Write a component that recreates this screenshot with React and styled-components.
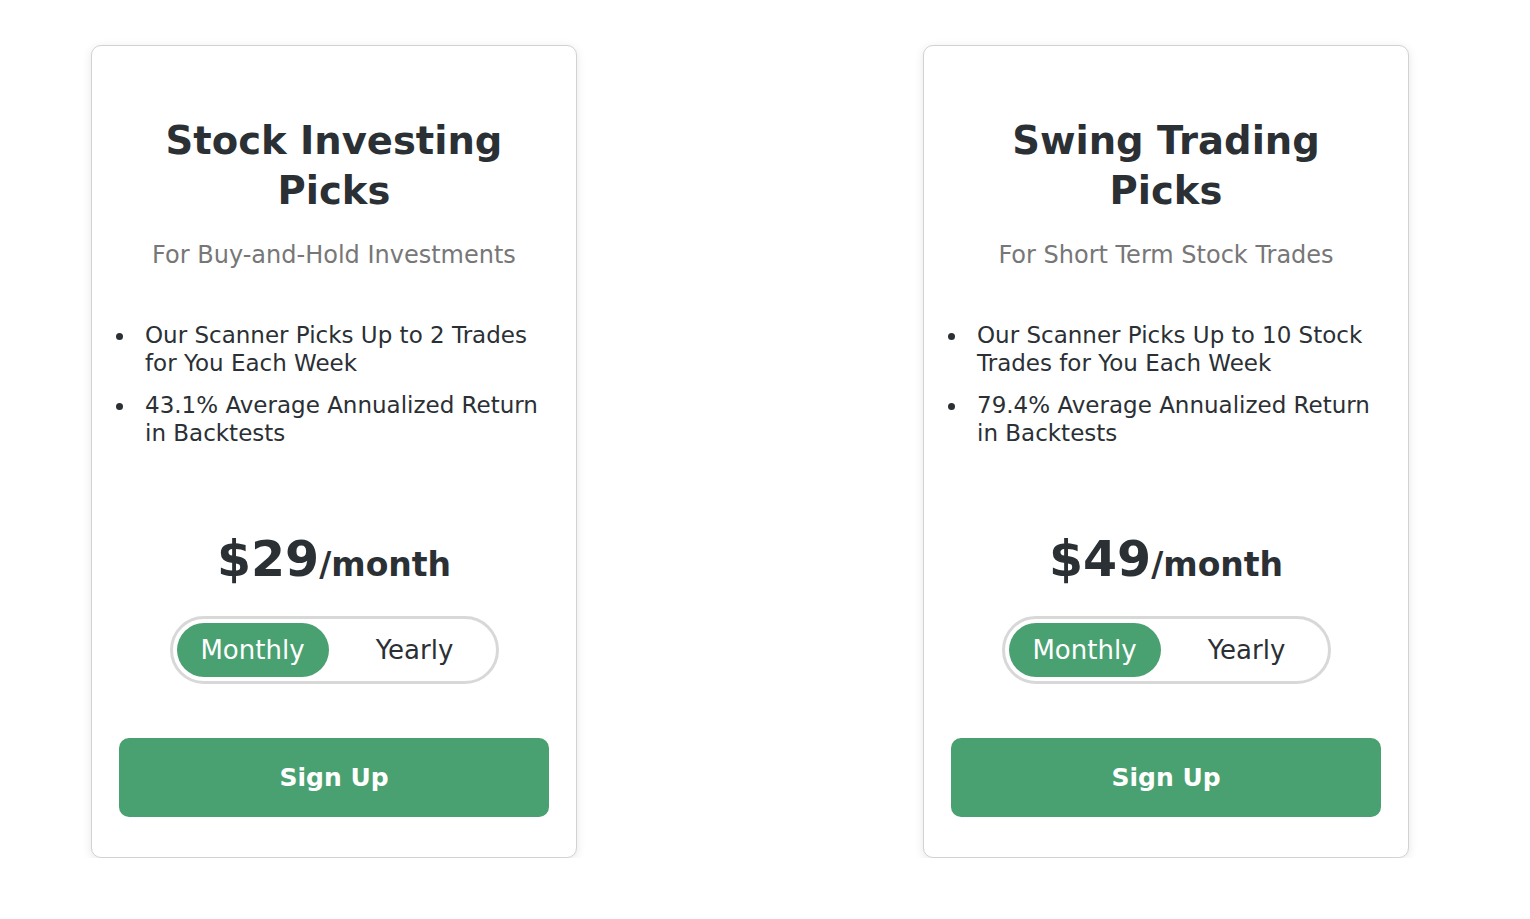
import React, { useState } from 'react';
import styled, { createGlobalStyle, css } from 'styled-components';

const GlobalStyle = createGlobalStyle`
    body {
        margin: 0;
        background: #fff;
        font-family: "DejaVu Sans", "Open Sans", sans-serif;
        color: #2b3035;
    }
`;

const plans = [
    {
        title: 'Stock Investing Picks',
        subtitle: 'For Buy-and-Hold Investments',
        features: [
            'Our Scanner Picks Up to 2 Trades for You Each Week',
            '43.1% Average Annualized Return in Backtests',
        ],
        price: 29,
    },
    {
        title: 'Swing Trading Picks',
        subtitle: 'For Short Term Stock Trades',
        features: [
            'Our Scanner Picks Up to 10 Stock Trades for You Each Week',
            '79.4% Average Annualized Return in Backtests',
        ],
        price: 49,
    },
];

const PlanCard = ({ plan }) => {
    const [period, setPeriod] = useState('monthly');
    return (
        <Card>
            <Title>{plan.title}</Title>
            <Subtitle>{plan.subtitle}</Subtitle>
            <Features>
                {plan.features.map(f => (
                    <Feature key={f}>{f}</Feature>
                ))}
            </Features>
            <Price>
                <Amount>${plan.price}</Amount>
                <Per>/month</Per>
            </Price>
            <Toggle>
                <ToggleOption active={period === 'monthly'} onClick={() => setPeriod('monthly')}>
                    Monthly
                </ToggleOption>
                <ToggleOption active={period === 'yearly'} onClick={() => setPeriod('yearly')}>
                    Yearly
                </ToggleOption>
            </Toggle>
            <SignUp>Sign Up</SignUp>
        </Card>
    );
};

const App = () => {
    return (
        <>
            <GlobalStyle />
            <Page>
                {plans.map(p => (
                    <PlanCard key={p.title} plan={p} />
                ))}
            </Page>
        </>
    );
};

const Page = styled.div`
    display: flex;
    align-items: flex-start;
    gap: 346px;
    padding: 45px 0 0 91px;
`;

const Card = styled.div`
    box-sizing: border-box;
    width: 486px;
    padding: 70px 27px 40px;
    border: 1px solid #d2d2d2;
    border-radius: 10px;
    box-shadow: 0 2px 10px rgba(0, 0, 0, 0.1);
    background: #fff;

    display: flex;
    flex-direction: column;
    align-items: center;
`;

const Title = styled.h2`
    margin: 0;
    padding: 0 40px;
    font-size: 38.5px;
    line-height: 50px;
    font-weight: 700;
    text-align: center;
    color: #2b3035;
`;

const Subtitle = styled.p`
    margin: 25px 0 0;
    font-size: 24px;
    line-height: 28px;
    color: #777;
    text-align: center;
`;

const Features = styled.ul`
    align-self: stretch;
    margin: 52px 0 0;
    padding: 0 0 0 26px;
    list-style: none;
`;

const Feature = styled.li`
    position: relative;
    font-size: 23px;
    line-height: 28px;
    color: #2b3035;

    &::before {
        content: '';
        position: absolute;
        left: -29px;
        top: 12px;
        width: 7px;
        height: 7px;
        border-radius: 50%;
        background: #2b3035;
    }

    & + & {
        margin-top: 14px;
    }
`;

const Price = styled.div`
    margin-top: 83px;
    display: flex;
    align-items: baseline;
    font-weight: 700;
    color: #2b3035;
`;

const Amount = styled.span`
    font-size: 49px;
    line-height: 60px;
`;

const Per = styled.span`
    font-size: 33px;
`;

const Toggle = styled.div`
    margin-top: 26px;
    box-sizing: border-box;
    width: 329px;
    height: 68px;
    padding: 4px;
    border: 3px solid #d8d8d8;
    border-radius: 34px;
    display: flex;
    align-items: center;
`;

const ToggleOption = styled.button`
    box-sizing: border-box;
    height: 54px;
    width: 152px;
    border: none;
    border-radius: 27px;
    background: transparent;
    font-family: inherit;
    font-size: 26px;
    color: #2b3035;
    cursor: pointer;

    & + & {
        margin-left: 10px;
    }

    ${props =>
        props.active && css`
            background: #49a171;
            color: #fff;
    `}
`;

const SignUp = styled.button`
    margin-top: 54px;
    align-self: stretch;
    height: 79px;
    border: none;
    border-radius: 10px;
    background: #49a171;
    color: #fff;
    font-family: inherit;
    font-size: 25px;
    font-weight: 700;
    cursor: pointer;
`;

export default App;
